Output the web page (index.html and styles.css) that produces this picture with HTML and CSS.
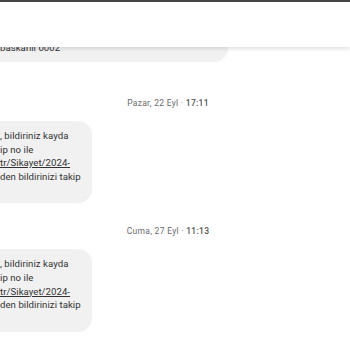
FILE: index.html
```html
<!DOCTYPE html>
<html lang="tr">
<head>
    <meta charset="UTF-8">
    <meta name="viewport" content="width=device-width, initial-scale=1.0">
    <title>Mesajlar</title>
    <link rel="stylesheet" href="styles.css">
</head>
<body>
    <div class="status-line"></div>
    <div class="app-bar"></div>

    <div class="thread">
        <div class="bubble bubble-first">
            <div class="line">baskanli 0002</div>
        </div>

        <div class="stamp">Pazar, 22 Eyl · <b>17:11</b></div>
        <div class="bubble">
            <div class="line">, bildiriniz kayda</div>
            <div class="line">ip no ile</div>
            <div class="line"><span class="link">tr/Sikayet/2024-</span></div>
            <div class="line">den bildirinizi takip</div>
        </div>

        <div class="stamp stamp-second">Cuma, 27 Eyl · <b>11:13</b></div>
        <div class="bubble">
            <div class="line">, bildiriniz kayda</div>
            <div class="line">ip no ile</div>
            <div class="line"><span class="link">tr/Sikayet/2024-</span></div>
            <div class="line">den bildirinizi takip</div>
        </div>
    </div>
</body>
</html>
```

FILE: styles.css
```css
body {
    margin: 0;
    background: #fff;
    font-family: Roboto, 'Noto Sans', sans-serif;
    color: #333;
    overflow: hidden;
}
.status-line {
    position: fixed;
    top: 0;
    left: 0;
    right: 0;
    height: 2px;
    background: #464646;
    z-index: 3;
}
.app-bar {
    position: fixed;
    top: 2px;
    left: 0;
    right: 0;
    height: 45px;
    background: #fff;
    box-shadow: 0 2px 4px rgba(0, 0, 0, 0.12);
    z-index: 2;
}
.thread {
    display: flex;
    flex-direction: column;
    align-items: flex-start;
    padding-top: 29px;
}
.bubble {
    background: #f1f1f1;
    margin-left: -30px;
    padding: 8px 11px 20px 30px;
    border-radius: 0 14px 14px 0;
    font-size: 9.6px;
    line-height: 13.6px;
    letter-spacing: 0.05px;
}
.bubble-first {
    padding: 12px 0 7px 30px;
    width: 228px;
    line-height: 14px;
}
.link {
    text-decoration: underline;
}
.stamp {
    align-self: stretch;
    text-align: center;
    font-size: 8.5px;
    letter-spacing: 0.3px;
    color: #6a6a6a;
    margin: 36px 0 13px;
    transform: translateX(-7px);
}
.stamp b {
    font-weight: 500;
    color: #555;
}
.stamp-second {
    margin-top: 23px;
}
```
